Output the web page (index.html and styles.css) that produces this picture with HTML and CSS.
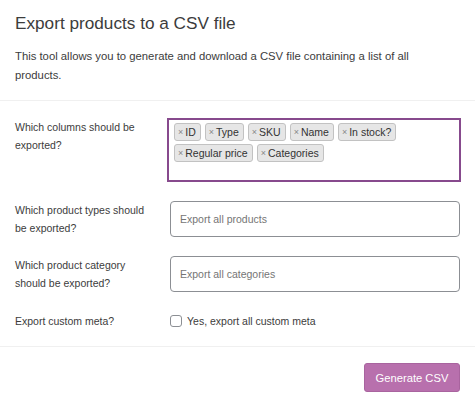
FILE: index.html
```html
<!DOCTYPE html>
<html lang="en">
<head>
    <meta charset="UTF-8">
    <meta name="viewport" content="width=device-width, initial-scale=1.0">
    <title>Export products</title>
    <link rel="stylesheet" href="styles.css">
</head>
<body>
    <div class="exporter">
        <header class="exporter-head">
            <h2>Export products to a CSV file</h2>
            <p>This tool allows you to generate and download a CSV file containing a list of all products.</p>
        </header>

        <section class="exporter-fields">
            <div class="field-row row-columns">
                <label class="field-label">Which columns should be exported?</label>
                <div class="tag-box">
                    <span class="tag"><i>×</i>ID</span>
                    <span class="tag"><i>×</i>Type</span>
                    <span class="tag"><i>×</i>SKU</span>
                    <span class="tag"><i>×</i>Name</span>
                    <span class="tag"><i>×</i>In stock?</span>
                    <span class="tag"><i>×</i>Regular price</span>
                    <span class="tag"><i>×</i>Categories</span>
                </div>
            </div>

            <div class="field-row">
                <label class="field-label">Which product types should be exported?</label>
                <div class="select-box">Export all products</div>
            </div>

            <div class="field-row">
                <label class="field-label">Which product category should be exported?</label>
                <div class="select-box">Export all categories</div>
            </div>

            <div class="field-row row-meta">
                <label class="field-label">Export custom meta?</label>
                <label class="check-label"><input type="checkbox"> Yes, export all custom meta</label>
            </div>
        </section>

        <footer class="exporter-foot">
            <button class="btn-generate">Generate CSV</button>
        </footer>
    </div>
</body>
</html>
```

FILE: styles.css
```css
body {
    margin: 0;
    background: #fff;
    font-family: "Liberation Sans", Arial, sans-serif;
    color: #3c3c3c;
}

.exporter-head {
    padding: 13px 15px 0;
    border-bottom: 1px solid #f0f0f0;
    height: 87px;
}

.exporter-head h2 {
    margin: 0;
    font-size: 17.2px;
    line-height: 20px;
    font-weight: 400;
    color: #3c3c3c;
}

.exporter-head p {
    margin: 14px 0 0;
    max-width: 410px;
    font-size: 11.3px;
    line-height: 19px;
}

.exporter-fields {
    display: flex;
    flex-direction: column;
    gap: 19px;
    padding: 17px 15px 15px;
    border-bottom: 1px solid #f0f0f0;
}

.field-row {
    display: grid;
    grid-template-columns: 155px 1fr;
    align-items: center;
}

.field-label {
    font-size: 10.5px;
    line-height: 18px;
    padding-right: 20px;
}

.row-columns {
    align-items: start;
}

.tag-box {
    margin: 0 -1px 0 -3px;
    height: 54px;
    border: 2px solid #874a8d;
    padding: 3px 5px;
    display: flex;
    flex-wrap: wrap;
    align-content: flex-start;
    gap: 3px 4px;
}

.tag {
    display: inline-flex;
    align-items: center;
    height: 16px;
    padding: 0 4px 0 3px;
    border: 1px solid #c2c2c2;
    border-radius: 3px;
    background: #e6e6e6;
    font-size: 10.5px;
    color: #333;
}

.tag i {
    font-style: normal;
    font-size: 9px;
    color: #888;
    margin-right: 2px;
}

.select-box {
    height: 36px;
    box-sizing: border-box;
    border: 1px solid #8c8f94;
    border-radius: 4px;
    padding: 0 9px;
    display: flex;
    align-items: center;
    font-size: 10.5px;
    color: #757575;
}

.row-meta {
    height: 20px;
}

.check-label {
    display: flex;
    align-items: center;
    gap: 5px;
    font-size: 10.5px;
}

.check-label input {
    appearance: none;
    margin: 0;
    width: 12px;
    height: 12px;
    border: 1px solid #8c8f94;
    border-radius: 3px;
}

.exporter-foot {
    display: flex;
    justify-content: flex-end;
    padding: 16px 15px 0;
}

.btn-generate {
    width: 96px;
    height: 29px;
    border: 1px solid #a9649f;
    border-radius: 3px;
    background: #b870ad;
    color: #fff;
    font-family: inherit;
    font-size: 11.2px;
}
```
